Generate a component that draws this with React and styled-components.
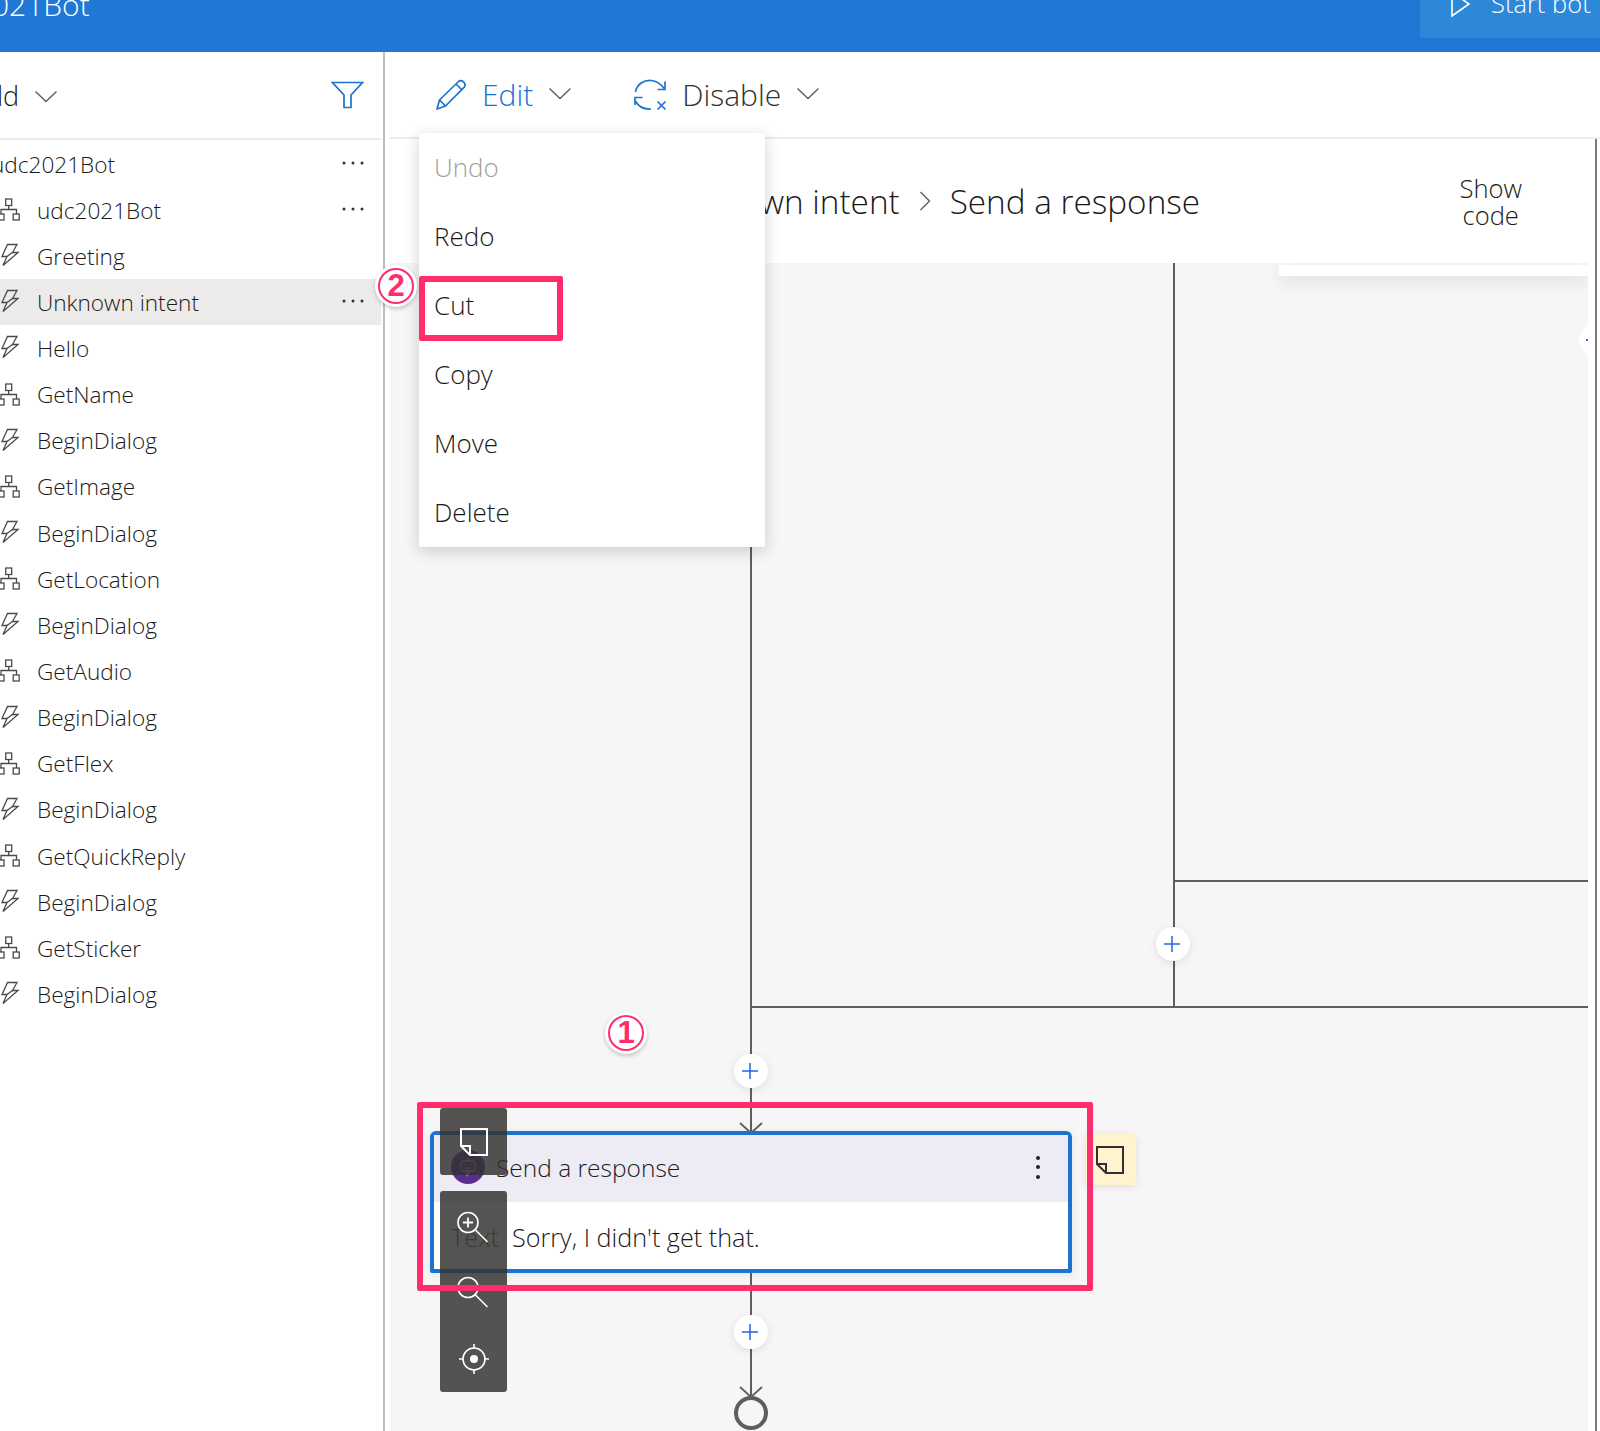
import styled, { createGlobalStyle } from "styled-components";

const FONT = `"Open Sans", "Noto Sans", sans-serif`;
const PINK = "#ff2d6b";
const BLUE = "#1a73d0";

const GlobalStyle = createGlobalStyle`
    html, body {
        margin: 0;
        padding: 0;
        background: #fff;
    }
    * {
        box-sizing: border-box;
    }
`;

const treeItems = [
    { kind: "flow", name: "udc2021Bot", more: true },
    { kind: "bolt", name: "Greeting" },
    { kind: "bolt", name: "Unknown intent", more: true, selected: true },
    { kind: "bolt", name: "Hello" },
    { kind: "flow", name: "GetName" },
    { kind: "bolt", name: "BeginDialog" },
    { kind: "flow", name: "GetImage" },
    { kind: "bolt", name: "BeginDialog" },
    { kind: "flow", name: "GetLocation" },
    { kind: "bolt", name: "BeginDialog" },
    { kind: "flow", name: "GetAudio" },
    { kind: "bolt", name: "BeginDialog" },
    { kind: "flow", name: "GetFlex" },
    { kind: "bolt", name: "BeginDialog" },
    { kind: "flow", name: "GetQuickReply" },
    { kind: "bolt", name: "BeginDialog" },
    { kind: "flow", name: "GetSticker" },
    { kind: "bolt", name: "BeginDialog" },
];

const menuItems = ["Undo", "Redo", "Cut", "Copy", "Move", "Delete"];

const Chevron = ({ color = "#605e5c" }) => (
    <svg width="24" height="13" viewBox="0 0 24 13" fill="none" stroke={color} strokeWidth="1.4">
        <path d="M1.5 1.5 L12 11.5 L22.5 1.5" />
    </svg>
);

const FlowIcon = () => (
    <svg width="23" height="24" viewBox="2 0 23 24" overflow="visible" fill="none" stroke="#4a4a4a" strokeWidth="1.3">
        <rect x="7.7" y="1" width="6" height="6.5" />
        <path d="M10.7 7.5 V11.5 M3 16 V11.5 H18.5 V16" />
        <rect x="0.5" y="16" width="5.5" height="6" />
        <rect x="15.2" y="16" width="6" height="6" />
    </svg>
);

const BoltIcon = () => (
    <svg width="23" height="26" viewBox="0 0 23 26" fill="none" stroke="#4a4a4a" strokeWidth="1.3" strokeLinejoin="miter">
        <path d="M7.5 1.5 H17 L12.5 9.5 H18 L3 22.5 L7 13.5 H2 Z" />
        <path d="M12.5 9.5 L7 13.5" />
    </svg>
);

const Dots = () => (
    <svg width="22" height="4" viewBox="0 0 22 4" fill="#323130">
        <circle cx="2" cy="2" r="1.5" />
        <circle cx="11" cy="2" r="1.5" />
        <circle cx="20" cy="2" r="1.5" />
    </svg>
);

const FilterIcon = () => (
    <svg width="33" height="28" viewBox="0 0 33 28" fill="none" stroke={BLUE} strokeWidth="1.7">
        <path d="M1.5 1.5 H31.5 L20 14 V26.5 H13 V14 Z" />
    </svg>
);

const PencilIcon = () => (
    <svg width="32" height="32" viewBox="0 0 32 32" fill="none" stroke={BLUE} strokeWidth="1.7" strokeLinejoin="round">
        <path d="M2 30 L4.5 21 L23.5 2.5 Q26 0.8 28.5 2.8 Q31 5 29.5 7.8 L10.5 27 Z" />
        <path d="M4.5 21 L10.5 27 M21 5 L27 11" />
    </svg>
);

const DisableIcon = () => (
    <svg width="33" height="32" viewBox="0 0 33 32" fill="none" stroke={BLUE} strokeWidth="1.7">
        <path d="M1.5 13 C3 5 10 1 17 1.5 C23 2 27 5 30 9.5" />
        <path d="M31 2.5 V10.5 H23.5" />
        <path d="M1.5 22 C4 27 9 30.5 17 30" />
        <path d="M1 26 V18.5 H8.5" />
        <path d="M23.5 22.5 L31.5 30.5 M31.5 22.5 L23.5 30.5" />
    </svg>
);

const PlayIcon = () => (
    <svg width="21" height="18" viewBox="0 0 21 18" fill="none" stroke="#fff" strokeWidth="1.6">
        <path d="M2 -4 V16 L19 4 L2 -8" />
    </svg>
);

const NoteIcon = ({ color, size = 28, width = 2 }) => (
    <svg width={size} height={size} viewBox="0 0 28 28" fill="none" stroke={color} strokeWidth={width}>
        <path d="M1 1 H27 V27 H10 L1 18 Z" />
        <path d="M1 18 H10 V27" />
    </svg>
);

const ZoomIcon = ({ sign }) => (
    <svg width="32" height="32" viewBox={sign ? "1.5 -2 32 32" : "1.5 0 32 32"} overflow="visible" fill="none" stroke="#fff" strokeWidth="1.6">
        <circle cx="11.5" cy="11.5" r="10" />
        <path d="M19 19 L31 31" />
        {sign && <path d="M6.5 11.5 H16.5 M11.5 6.5 V16.5" strokeWidth="1.8" />}
    </svg>
);

const TargetIcon = () => (
    <svg width="30" height="30" viewBox="0 0 30 30" fill="none" stroke="#fff" strokeWidth="1.6">
        <circle cx="15" cy="15" r="11" />
        <circle cx="15" cy="15" r="4" fill="#fff" stroke="none" />
        <path d="M15 0 V4 M15 26 V30 M0 15 H4 M26 15 H30" />
    </svg>
);

const BotIcon = () => (
    <svg width="18" height="20" viewBox="0 0 18 20" fill="none" stroke="#b4a0d6" strokeWidth="1.3">
        <rect x="2" y="4" width="14" height="10" rx="2" />
        <path d="M9 1 V4 M6 7.5 V8.5 M12 7.5 V8.5 M6.5 11 H11.5 M8 14 V18 L11 14" />
    </svg>
);

const PlusIcon = () => (
    <svg width="16" height="16" viewBox="0 0 16 16" stroke="#2563e0" strokeWidth="1.5">
        <path d="M0 8 H16 M8 0 V16" />
    </svg>
);

const ArrowHead = () => (
    <svg width="24" height="12" viewBox="0 0 24 12" fill="none" stroke="#605e5c" strokeWidth="1.8">
        <path d="M1 1 L12 11 L23 1" />
    </svg>
);

export default function App() {
    return (
        <Page>
            <GlobalStyle />
            <Header>
                <BotName>udc2021Bot</BotName>
                <StartButton>
                    <PlayIcon />
                    <span>Start bot</span>
                </StartButton>
            </Header>

            <Body>
                <Sidebar>
                    <SidebarInner>
                        <FilterRow>
                            <FilterLabel>
                                <span>ld</span>
                                <Chevron />
                            </FilterLabel>
                            <FilterIcon />
                        </FilterRow>
                        <RootRow>
                            <span>udc2021Bot</span>
                            <MoreSlot><Dots /></MoreSlot>
                        </RootRow>
                        {treeItems.map((item, i) => (
                            <TreeRow key={i} $selected={item.selected}>
                                <TreeIcon>{item.kind === "flow" ? <FlowIcon /> : <BoltIcon />}</TreeIcon>
                                <span>{item.name}</span>
                                {item.more && <MoreSlot><Dots /></MoreSlot>}
                            </TreeRow>
                        ))}
                    </SidebarInner>
                </Sidebar>

                <Main>
                    <Toolbar>
                        <ToolButton $color={BLUE}>
                            <PencilIcon />
                            <span>Edit</span>
                            <Chevron />
                        </ToolButton>
                        <ToolButton $color="#323130">
                            <DisableIcon />
                            <span>Disable</span>
                            <Chevron />
                        </ToolButton>
                    </Toolbar>

                    <Editor>
                        <Breadcrumb>
                            <Crumbs>
                                <span>Unknown intent</span>
                                <svg width="12" height="20" viewBox="0 0 12 20" fill="none" stroke="#605e5c" strokeWidth="1.4">
                                    <path d="M1.5 1 L10.5 10 L1.5 19" />
                                </svg>
                                <span>Send a response</span>
                            </Crumbs>
                            <ShowCode>Show<br />code</ShowCode>
                        </Breadcrumb>

                        <Canvas>
                            <Wire $x={360} $y={0} $h={868} />
                            <Wire $x={360} $y={1010} $h={125} />
                            <Wire $x={782.5} $y={0} $h={745} />
                            <Wire $x={361} $y={743} $w={837} />
                            <Wire $x={783} $y={617} $w={415} />

                            <PeekPanel />
                            <EdgeButton><EdgeDot /></EdgeButton>

                            <AddButton $x={783} $y={681}><PlusIcon /></AddButton>
                            <AddButton $x={361} $y={808}><PlusIcon /></AddButton>
                            <AddButton $x={361} $y={1069}><PlusIcon /></AddButton>

                            <Head $x={349} $y={859}><ArrowHead /></Head>
                            <Head $x={349} $y={1123}><ArrowHead /></Head>
                            <EndNode />

                            <ActionCard>
                                <CardHeader>
                                    <BotBadge><BotIcon /></BotBadge>
                                    <span>Send a response</span>
                                    <Kebab><i /><i /><i /></Kebab>
                                </CardHeader>
                                <CardBody>
                                    <FieldLabel>Text</FieldLabel>
                                    <span>Sorry, I didn't get that.</span>
                                </CardBody>
                            </ActionCard>

                            <NoteTab><NoteIcon color="#323130" /></NoteTab>

                            <DarkPanel $y={845}>
                                <DarkButton><NoteIcon color="#fff" /></DarkButton>
                            </DarkPanel>
                            <DarkPanel $y={928}>
                                <DarkButton><ZoomIcon sign /></DarkButton>
                                <DarkButton><ZoomIcon /></DarkButton>
                                <DarkButton><TargetIcon /></DarkButton>
                            </DarkPanel>

                            <CardMark />
                        </Canvas>
                    </Editor>
                </Main>
            </Body>

            <EditMenu>
                {menuItems.map((label) => (
                    <MenuItem key={label} $disabled={label === "Undo"}>{label}</MenuItem>
                ))}
            </EditMenu>
            <CutMark />
            <Badge $x={377} $y={267}>2</Badge>
            <Badge $x={607} $y={1014}>1</Badge>
        </Page>
    );
}

const Page = styled.div`
    position: relative;
    width: 1600px;
    height: 1431px;
    overflow: hidden;
    display: flex;
    flex-direction: column;
    font-family: ${FONT};
    font-weight: 350;
    color: #1b1a19;
    background: #fff;
`;

const Header = styled.header`
    flex: none;
    height: 52px;
    background: #1f78d5;
    display: flex;
    justify-content: space-between;
    align-items: flex-start;
    color: #fff;
    overflow: hidden;
`;

const BotName = styled.div`
    font-size: 30px;
    line-height: 36px;
    margin: -13px 0 0 -75px;
`;

const StartButton = styled.div`
    width: 180px;
    height: 38px;
    background: #2e88d9;
    border-bottom-left-radius: 3px;
    display: flex;
    align-items: flex-start;
    gap: 20px;
    padding-left: 30px;
    font-size: 25.5px;
    line-height: 30px;
    span {
        margin-top: -12px;
    }
`;

const Body = styled.div`
    flex: 1;
    display: flex;
    min-height: 0;
`;

const Sidebar = styled.aside`
    flex: none;
    width: 390px;
    overflow: hidden;
`;

const SidebarInner = styled.div`
    width: 385px;
    height: 100%;
    padding-right: 2px;
    border-right: 2px solid #bdbdbd;
    font-size: 22.6px;
`;

const FilterRow = styled.div`
    height: 88px;
    display: flex;
    align-items: center;
    justify-content: space-between;
    padding: 0 17px 0 0;
    border-bottom: 2px solid #edebe9;
`;

const FilterLabel = styled.div`
    display: flex;
    align-items: center;
    gap: 15px;
    margin-left: -3px;
    font-size: 27px;
    svg {
        margin-top: 2px;
    }
`;

const RootRow = styled.div`
    height: 46px;
    margin-top: 1px;
    display: flex;
    align-items: center;
    text-indent: -9px;
`;

const TreeRow = styled.div`
    height: 46.15px;
    display: flex;
    align-items: center;
    background: ${(props) => (props.$selected ? "#edebe9" : "transparent")};
`;

const TreeIcon = styled.div`
    width: 37px;
    flex: none;
    display: flex;
    align-items: center;
`;

const MoreSlot = styled.div`
    margin-left: auto;
    margin-right: 17px;
    margin-top: -2px;
    display: flex;
`;

const Main = styled.main`
    flex: 1;
    min-width: 0;
    display: flex;
    flex-direction: column;
`;

const Toolbar = styled.div`
    flex: none;
    height: 87px;
    display: flex;
    align-items: center;
    gap: 62px;
    padding-left: 45px;
    border-bottom: 2px solid #edebe9;
`;

const ToolButton = styled.div`
    display: flex;
    align-items: center;
    gap: 15px;
    font-size: 30px;
    color: ${(props) => props.$color};
    svg:last-child {
        margin-top: -2px;
    }
`;

const Editor = styled.div`
    flex: 1;
    min-height: 0;
    margin-right: 3px;
    border-right: 2px solid #7a7a7a;
    display: flex;
    flex-direction: column;
`;

const Breadcrumb = styled.div`
    flex: none;
    height: 124px;
    display: flex;
    align-items: center;
    justify-content: space-between;
    padding-right: 73px;
`;

const Crumbs = styled.div`
    display: flex;
    align-items: center;
    gap: 19px;
    margin-left: 271px;
    font-size: 33.3px;
    white-space: nowrap;
`;

const ShowCode = styled.div`
    font-size: 25.6px;
    line-height: 27px;
    text-align: center;
    margin-top: 1px;
`;

const Canvas = styled.div`
    position: relative;
    flex: 1;
    min-height: 0;
    width: 1198px;
    overflow: hidden;
    background: #f6f6f6;
    font-size: 24.5px;
`;

const Wire = styled.div`
    position: absolute;
    left: ${(props) => props.$x}px;
    top: ${(props) => props.$y}px;
    width: ${(props) => props.$w || 2}px;
    height: ${(props) => props.$h || 2}px;
    background: #605e5c;
`;

const PeekPanel = styled.div`
    position: absolute;
    left: 889px;
    top: 2px;
    width: 309px;
    height: 11px;
    background: #fff;
    box-shadow: 0 6px 16px rgba(0, 0, 0, 0.1);
`;

const EdgeButton = styled.div`
    position: absolute;
    left: 1189px;
    top: 61px;
    width: 32px;
    height: 32px;
    border-radius: 50%;
    background: #fff;
`;

const EdgeDot = styled.div`
    position: absolute;
    left: 7px;
    top: 15px;
    width: 2px;
    height: 2px;
    background: #2563e0;
`;

const AddButton = styled.div`
    position: absolute;
    left: ${(props) => props.$x - 17}px;
    top: ${(props) => props.$y - 17}px;
    width: 34px;
    height: 34px;
    padding-right: 2px;
    border-radius: 50%;
    background: #fff;
    box-shadow: 0 2px 8px rgba(0, 0, 0, 0.1);
    display: flex;
    align-items: center;
    justify-content: center;
`;

const Head = styled.div`
    position: absolute;
    left: ${(props) => props.$x}px;
    top: ${(props) => props.$y}px;
    display: flex;
`;

const EndNode = styled.div`
    position: absolute;
    left: 344px;
    top: 1133px;
    width: 34px;
    height: 34px;
    border: 4px solid #605e5c;
    border-radius: 50%;
`;

const ActionCard = styled.div`
    position: absolute;
    left: 40px;
    top: 868px;
    width: 642px;
    height: 142px;
    border: 4px solid ${BLUE};
    border-radius: 6px 6px 2px 2px;
    background: #fff;
    box-shadow: 0 2px 8px rgba(0, 0, 0, 0.08);
    display: flex;
    flex-direction: column;
`;

const CardHeader = styled.div`
    flex: none;
    height: 67px;
    background: #edebf4;
    display: flex;
    align-items: center;
    gap: 11px;
    padding: 0 28px 3px 17px;
`;

const BotBadge = styled.div`
    width: 34px;
    height: 34px;
    border-radius: 50%;
    background: #5c2d91;
    display: flex;
    align-items: center;
    justify-content: center;
`;

const Kebab = styled.div`
    margin-left: auto;
    display: flex;
    flex-direction: column;
    gap: 5.5px;
    i {
        display: block;
        width: 4px;
        height: 4px;
        border-radius: 50%;
        background: #252423;
    }
`;

const CardBody = styled.div`
    flex: 1;
    display: flex;
    align-items: center;
    padding: 3px 0 0 17px;
    font-size: 25.2px;
`;

const FieldLabel = styled.span`
    width: 61px;
    color: #605e5c;
`;

const NoteTab = styled.div`
    position: absolute;
    left: 696px;
    top: 871px;
    width: 50px;
    height: 51px;
    border-radius: 3px;
    background: #fff4ce;
    box-shadow: 0 2px 8px rgba(0, 0, 0, 0.1);
    display: flex;
    align-items: center;
    justify-content: center;
    padding-right: 2px;
`;

const DarkPanel = styled.div`
    position: absolute;
    left: 50px;
    top: ${(props) => props.$y}px;
    width: 67px;
    border-radius: 3px;
    background: rgba(50, 49, 48, 0.83);
    display: flex;
    flex-direction: column;
`;

const DarkButton = styled.div`
    height: 67px;
    display: flex;
    align-items: center;
    justify-content: center;
`;

const CardMark = styled.div`
    position: absolute;
    left: 27px;
    top: 839px;
    width: 676px;
    height: 189px;
    border: 6px solid ${PINK};
    border-radius: 2px;
`;

const EditMenu = styled.div`
    position: absolute;
    left: 419px;
    top: 133px;
    width: 346px;
    height: 414px;
    background: #fff;
    border-radius: 2px;
    box-shadow: 0 4px 16px rgba(0, 0, 0, 0.18);
    font-size: 26px;
`;

const MenuItem = styled.div`
    height: 69px;
    padding: 0 0 2px 15px;
    display: flex;
    align-items: center;
    color: ${(props) => (props.$disabled ? "#a19f9d" : "#1b1a19")};
`;

const CutMark = styled.div`
    position: absolute;
    left: 419px;
    top: 276px;
    width: 144px;
    height: 65px;
    border: 6px solid ${PINK};
    border-radius: 2px;
`;

const Badge = styled.div`
    position: absolute;
    left: ${(props) => props.$x}px;
    top: ${(props) => props.$y}px;
    width: 38px;
    height: 38px;
    border-radius: 50%;
    border: 3px solid ${PINK};
    outline: 3px solid #fff;
    outline-offset: -1px;
    box-shadow: 0 2px 4px 2px rgba(0, 0, 0, 0.2);
    background: #fff;
    color: ${PINK};
    font-family: "Liberation Sans", sans-serif;
    font-weight: 700;
    font-size: 31px;
    display: flex;
    align-items: center;
    justify-content: center;
`;
